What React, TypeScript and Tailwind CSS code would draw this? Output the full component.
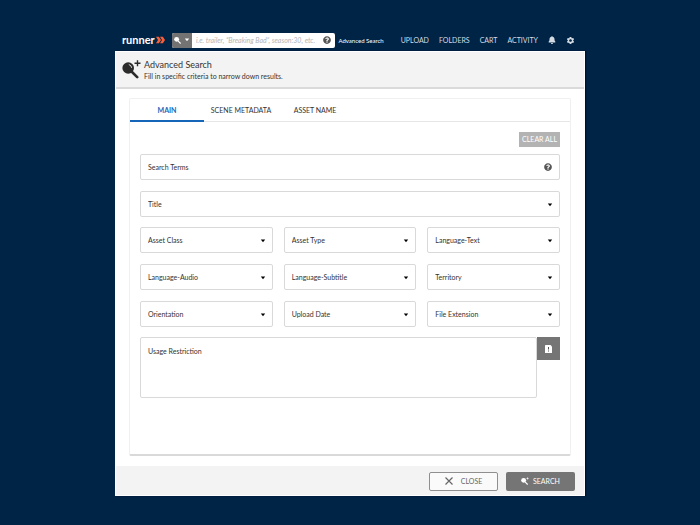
import type { ReactNode } from "react";
import { FaBell, FaQuestionCircle } from "react-icons/fa";
import { MdSettings } from "react-icons/md";

const navLinks = ["UPLOAD", "FOLDERS", "CART", "ACTIVITY"];

const tabs = [
  { name: "MAIN", active: true },
  { name: "SCENE METADATA", active: false },
  { name: "ASSET NAME", active: false },
];

const filters = [
  "Asset Class",
  "Asset Type",
  "Language-Text",
  "Language-Audio",
  "Language-Subtitle",
  "Territory",
  "Orientation",
  "Upload Date",
  "File Extension",
];

const Magnifier = ({
  className,
  children,
}: {
  className: string;
  children?: ReactNode;
}) => (
  <svg viewBox="0 0 19 19" className={className} aria-hidden="true">
    <circle cx="6.2" cy="8" r="5.8" fill="currentColor" />
    <path
      d="M9.5 11.5L15.2 17.2"
      stroke="currentColor"
      strokeWidth="2.6"
      strokeLinecap="round"
    />
    {children}
  </svg>
);

const Caret = ({ className }: { className: string }) => (
  <svg viewBox="0 0 6 4" className={className} aria-hidden="true">
    <path d="M0.8 0.6h4.4L3 3.2z" fill="currentColor" />
  </svg>
);

const SelectField = ({ name }: { name: string }) => (
  <div className="relative">
    <select
      aria-label={name}
      className="block h-[26px] w-full appearance-none rounded-xs border border-[#d9d9d9] bg-white pl-[7px] pr-5 text-[7px] text-[#333]"
    >
      <option>{name}</option>
    </select>
    <Caret className="pointer-events-none absolute right-[7px] top-[12px] h-1 w-[6px] text-black" />
  </div>
);

const TopBar = () => (
  <header className="flex h-[22px] items-center pl-[7px] pr-[10px] text-[7px] text-white">
    <a href="#" className="flex w-[50px] items-center gap-px">
      <span className="text-[11px] font-bold leading-3">runner</span>
      <svg viewBox="0 0 9 8" className="h-2 w-[9px]" aria-hidden="true">
        <path
          d="M0 0.7h2.9L5 4 2.9 7.3H0L2 4zM4 0.7h2.9L9 4 6.9 7.3H4L6 4z"
          fill="#f4603c"
        />
      </svg>
    </a>
    <div className="flex h-[15px] flex-1 overflow-hidden rounded-xs bg-white">
      <button
        aria-label="Search type"
        className="flex w-5 items-center justify-center gap-[2px] bg-[#737373]"
      >
        <Magnifier className="h-2 w-2" />
        <Caret className="h-1 w-[6px]" />
      </button>
      <input
        type="text"
        aria-label="Search"
        placeholder={"i.e. trailer, \u201cBreaking Bad\u201d, season:30, etc."}
        className="min-w-0 flex-1 pl-1 text-[7px] italic text-[#333] outline-0 placeholder:text-[#b5b5b5]"
      />
      <FaQuestionCircle className="mr-1 self-center text-[8px] text-[#555]" />
    </div>
    <a href="#" className="ml-[3px] text-[6px]">
      Advanced Search
    </a>
    <nav className="ml-[17px] flex items-center gap-[10px] text-[#d5dbe2]">
      {navLinks.map((link) => (
        <a href="#" key={link}>
          {link}
        </a>
      ))}
      <button aria-label="Notifications" className="text-[8px]">
        <FaBell />
      </button>
      <button aria-label="Settings" className="text-[9px]">
        <MdSettings />
      </button>
    </nav>
  </header>
);

const SearchForm = () => (
  <form className="flex flex-col px-[10px] pt-[10px] pb-[56px]">
    <button
      type="reset"
      className="h-[15px] self-end bg-[#b3b3b3] px-[3px] text-[7px] text-white"
    >
      CLEAR ALL
    </button>
    <div className="mt-[7px] flex flex-col gap-[10px]">
      <div className="flex flex-col gap-[11px]">
        <div className="flex h-[26px] items-center rounded-xs border border-[#d9d9d9] px-[7px]">
          <input
            type="text"
            aria-label="Search Terms"
            placeholder="Search Terms"
            className="min-w-0 flex-1 text-[7px] outline-0 placeholder:text-[#333]"
          />
          <FaQuestionCircle className="text-[8px] text-[#555]" />
        </div>
        <SelectField name="Title" />
      </div>
      <div className="grid grid-cols-3 gap-[11px]">
        {filters.map((name) => (
          <SelectField key={name} name={name} />
        ))}
      </div>
      <div className="flex items-start">
        <textarea
          aria-label="Usage Restriction"
          placeholder="Usage Restriction"
          className="block h-[61px] min-w-0 flex-1 resize-none rounded-xs border border-[#d9d9d9] px-[7px] py-2 text-[7px] outline-0 placeholder:text-[#333]"
        />
        <button
          type="button"
          aria-label="Restriction details"
          className="flex h-[23px] w-[23px] items-center justify-center bg-[#757575]"
        >
          <svg viewBox="0 0 7 8" className="h-2 w-[7px]" aria-hidden="true">
            <path d="M0 0.6L0.6 0H5.5L7 1.5V8H0z" fill="#fff" />
            <path d="M3 2h1v2.6H3zM3 5.4h1v1H3z" fill="#555" />
          </svg>
        </button>
      </div>
    </div>
  </form>
);

const App = () => {
  return (
    <div className="min-h-screen bg-[#002445] px-4 pt-[29px] pb-[29px] font-['Lato',sans-serif]">
      <div className="mx-auto w-full max-w-[470px]">
        <TopBar />
        <main className="border border-white bg-white shadow-[1px_0_1px_#00102a]">
          <div className="flex h-[37px] items-center gap-[3px] border-b-2 border-[#dadada] bg-[#f3f3f3] pl-[6px]">
            <Magnifier className="h-[19px] w-[19px] text-[#2b2b2b]">
              <path
                d="M7.2 4.6a3.4 3.4 0 0 1 2.4 2.8"
                fill="none"
                stroke="#f3f3f3"
                strokeWidth="0.9"
                strokeLinecap="round"
              />
              <path
                d="M12.5 3.2h6M15.5 0.2v6"
                stroke="currentColor"
                strokeWidth="1.4"
              />
            </Magnifier>
            <div className="text-[#333]">
              <h1 className="text-[9px] leading-3">Advanced Search</h1>
              <p className="text-[7px] leading-[10px]">
                Fill in specific criteria to narrow down results.
              </p>
            </div>
          </div>
          <section className="mx-[13px] mt-[9px] mb-[10px] rounded-xs border border-[#f0f0f0] border-b-2 border-b-[#d9d9d9]">
            <div
              role="tablist"
              className="flex h-[23px] border-b border-[#e6e6e6] text-[7px]"
            >
              {tabs.map((tab) => (
                <button
                  key={tab.name}
                  role="tab"
                  aria-selected={tab.active}
                  className={
                    tab.active
                      ? "-mb-px w-[74px] border-b-2 border-[#1565b8] pt-px font-bold text-[#1565b8]"
                      : "w-[74px] text-[#333]"
                  }
                >
                  {tab.name}
                </button>
              ))}
            </div>
            <SearchForm />
          </section>
          <footer className="flex h-[29px] items-center justify-end gap-2 bg-[#f3f3f3] pt-px pr-[9px] text-[7px]">
            <button className="flex h-[19px] w-[69px] items-center justify-center gap-2 rounded-xs border border-[#8f8f8f] bg-[#fafafa] text-[#666]">
              <svg viewBox="0 0 8 8" className="h-2 w-2" aria-hidden="true">
                <path
                  d="M0.5 0.5l7 7M7.5 0.5l-7 7"
                  stroke="currentColor"
                  strokeWidth="1.2"
                />
              </svg>
              CLOSE
            </button>
            <button className="flex h-[19px] w-[69px] items-center justify-center gap-1 rounded-xs bg-[#757575] text-white">
              <Magnifier className="h-2 w-2">
                <path
                  d="M13 3.5h5M15.5 1v5"
                  stroke="currentColor"
                  strokeWidth="1.6"
                />
              </Magnifier>
              SEARCH
            </button>
          </footer>
        </main>
      </div>
    </div>
  );
};

export default App;
